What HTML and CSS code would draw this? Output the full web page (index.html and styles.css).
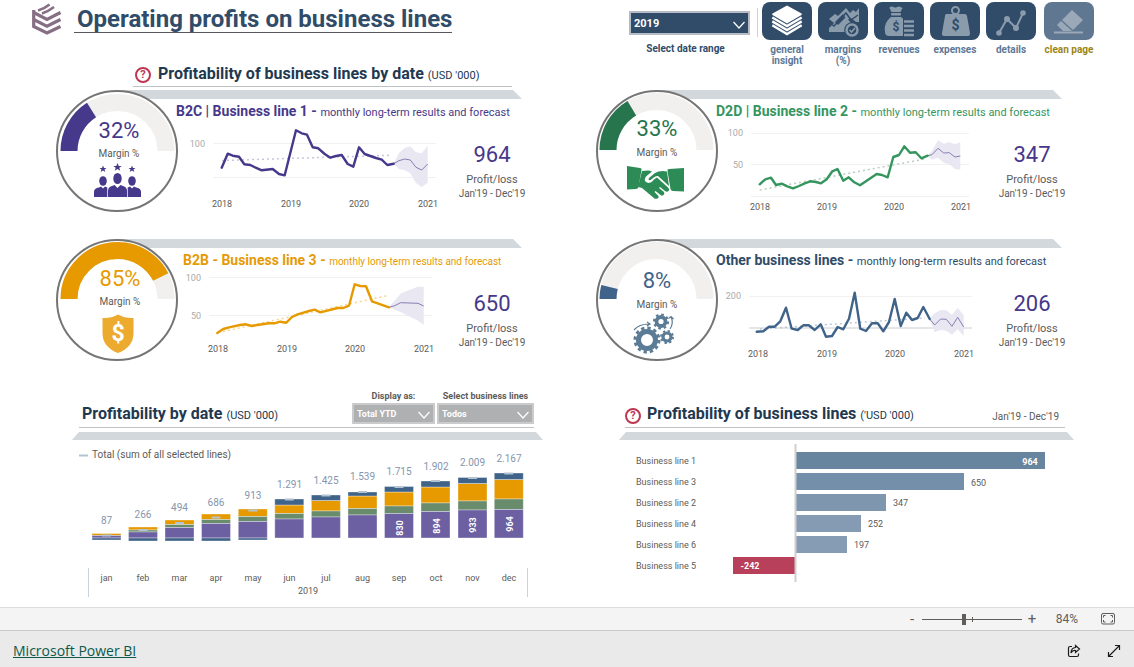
FILE: index.html
```html
<!DOCTYPE html>
<html lang="en">
<head>
<meta charset="utf-8">
<title>Operating profits on business lines</title>
<link rel="stylesheet" href="styles.css">
</head>
<body>
<main class="report">
  <header class="top">
    <svg class="logo" viewBox="0 0 30 32" aria-hidden="true">
      <g fill="none" stroke="#866f84" stroke-width="3.200">
        <path d="M1.700 7v16.500L15 30l13.500-6.500"/>
        <path d="M1.700 9.500L15 16.500 28.500 9.500"/>
        <path d="M1.700 16.500L15 23.300 28.500 16.500"/>
        <path d="M6 7.500Q12 6 17.500 1.500M10 10.500Q16 8.500 22 4" stroke-width="2.600"/>
      </g>
    </svg>
    <h1 class="top__title">Operating profits on business lines</h1>
    <div class="slicer slicer--date">
      <div class="select select--navy">
        <select id="year"><option>2019</option></select>
        <svg class="chevron" viewBox="0 0 12 8" aria-hidden="true"><path d="M.5 1L6 7l5.500-6"/></svg>
      </div>
      <label for="year">Select date range</label>
    </div>
    <div class="top__divider"></div>
    <nav class="nav">
      <button class="nav__item">
        <svg class="tile" viewBox="0 0 50 38" aria-hidden="true">
          <path fill="#fff" d="M25 3.500L39.500 11.500q.8.8 0 1.600L25 21.500 10.500 13q-.8-.8 0-1.500z"/>
          <path fill="none" stroke="#fff" stroke-width="2.400" d="M10.300 15.500L25 24l14.700-8.500M10.300 19.400L25 28l14.700-8.600M10.300 23.300L25 32l14.700-8.700"/>
        </svg>
        <span>general insight</span>
      </button>
      <button class="nav__item">
        <svg class="tile" viewBox="0 0 50 38" aria-hidden="true">
          <g fill="#8a9bac">
            <path d="M11 17l6-5 3 2 8-8 4 5 3-3 3 2 3-4v14l-3 0-5-4-4 2-4-6-9 9-5-4z"/>
            <path d="M11 30v-4l6-6 3 3 8-8 5 6 1 1-4 3-2 5z"/>
          </g>
          <path d="M11 20.500l5 3.500 12-13 5 7 7-5" fill="none" stroke="#304c69" stroke-width="1.500"/>
          <circle cx="34" cy="28" r="7.800" fill="#304c69"/>
          <circle cx="34" cy="28" r="5.500" fill="none" stroke="#8a9bac" stroke-width="2.400"/>
          <path d="M31.500 28l2 2 3.500-4" fill="none" stroke="#8a9bac" stroke-width="1.600"/>
        </svg>
        <span>margins (%)</span>
      </button>
      <button class="nav__item">
        <svg class="tile" viewBox="0 0 50 38" aria-hidden="true">
          <g fill="#8a9bac">
            <path d="M16 5q2-1 3.500 0t3.500 0 3.500 0l2 1-2 4h-9l-2-4z"/><rect x="17" y="11" width="10" height="2.500" rx="1"/>
            <path d="M17 15h10c5 4 7 9 6 15-.4 3-2 4-4 4H15c-2 0-4-1-4-4-1-6 1-11 6-15z"/>
          </g>
          <path d="M29 17h13v18H29z" fill="#304c69"/>
          <path d="M30 19.500h10M30 24h10M30 28.500h10M30 33h10" stroke="#8a9bac" stroke-width="2.400"/>
          <text x="22" y="29" class="tile__dollar">$</text>
        </svg>
        <span>revenues</span>
      </button>
      <button class="nav__item">
        <svg class="tile" viewBox="0 0 50 38" aria-hidden="true">
          <circle cx="25.500" cy="8.500" r="3.500" fill="none" stroke="#8a9bac" stroke-width="2"/>
          <path d="M16 12h19q1.500 0 2 2l3 17q.3 3-2 3H14q-2.500 0-2-3l3-17q.3-2 1-2z" fill="#8a9bac"/>
          <text x="25.500" y="28" class="tile__dollar tile__dollar--big">$</text>
        </svg>
        <span>expenses</span>
      </button>
      <button class="nav__item">
        <svg class="tile" viewBox="0 0 50 38" aria-hidden="true">
          <path d="M13 31l8-14 9 9 7-15" fill="none" stroke="#8a9bac" stroke-width="2"/>
          <g fill="#8a9bac"><circle cx="13" cy="31" r="2.800"/><circle cx="21" cy="17" r="3"/><circle cx="30" cy="26" r="3"/><circle cx="37" cy="11" r="2.800"/></g>
        </svg>
        <span>details</span>
      </button>
      <button class="nav__item nav__item--clean">
        <svg class="tile" viewBox="0 0 50 38" aria-hidden="true">
          <path d="M28 8l11 10-10 10-11-10zM17 19l11 10h-9l-6-6z" fill="#9ba8b8"/>
          <path d="M10 30.500h29" stroke="#9ba8b8" stroke-width="2"/>
        </svg>
        <span>clean page</span>
      </button>
    </nav>
  </header>

  <div class="section-head">
    <button class="help" aria-label="Help">?</button>
    <h2 class="heading">Profitability of business lines by date <small>(USD '000)</small></h2>
  </div>

  <section class="cards">
    <article class="card card--purple">
      <div class="card__band"></div>
      <svg class="gauge" viewBox="0 0 122 122">
        <circle class="gauge__ring" cx="60" cy="61" r="60"/>
        <path class="gauge__track" d="M12 61a48.500 48.500 0 0 1 97 0"/>
        <path class="gauge__fill" pathLength="100" stroke-dasharray="32 100" d="M12 61a48.500 48.500 0 0 1 97 0"/>
        <text class="gauge__value" x="62" y="48">32%</text>
        <text class="gauge__label" x="62" y="67">Margin %</text>
        <g fill="#46388a">
          <path d="M46 75.500l1 2.400h2.500l-2 1.600.8 2.500-2.300-1.500-2.300 1.500.8-2.500-2-1.600H45zM75 75.500l1 2.400h2.500l-2 1.600.8 2.500-2.300-1.500-2.300 1.500.8-2.500-2-1.600H74zM60.500 73l1.200 2.900h3l-2.400 1.900.9 3-2.700-1.800-2.700 1.800.9-3-2.400-1.900h3z"/>
          <ellipse cx="46" cy="91" rx="3.800" ry="4.800"/><ellipse cx="75" cy="91" rx="3.800" ry="4.800"/><ellipse cx="60.500" cy="88.500" rx="4.200" ry="5.500"/>
          <path d="M37 107v-5q0-4 5-4.500l2-1 2 2 2-2 2.300 1v9.500zM70.700 107v-9.500l2.300-1 2 2 2-2 2 1q5 .5 5 4.500v5zM51 107v-6q0-4 4-5l2.500-1 3 3 3-3 2.500 1q4 1 4 5v6z"/>
        </g>
      </svg>
      <h3 class="card__title">B2C | Business line 1 - <small>monthly long-term results and forecast</small></h3>
      <svg class="chart" viewBox="176 123 277 90">
        <path class="grid" d="M213 143.500h223M213 177.500h223"/>
        <text class="axis-y" x="205" y="147">100</text>
        <path class="range" d="M393.700 163.700L399 153l5.700-5 5.600-1.700 5.700 6 5.700 1 6-7.600v37l-6 4.300-5.700-4-5.700-9.700-5.600-3-5.700-1.300z"/>
        <path class="trend" d="M222 160.500L391 155.300"/>
        <polyline class="forecast" points="393.700,163.700 399,160.700 404.700,159 410.300,160 416,167.300 421.700,170 427.700,164"/>
        <polyline class="actual" points="221.700,167.700 227.700,153.700 232.700,155.700 239,156.700 244.300,164.300 250.300,165 255.700,167.700 261.700,170.300 272.700,169 279,174 284.700,175.300 296,130.300 301.700,133.300 307,134.700 312.700,147.300 318.300,148.300 324.700,154 330.300,157.700 336,156 341.700,155 347.700,164 353.300,166.700 359,147.300 364.700,154 370.300,156 376,158 381.700,159.700 387.300,165 393.700,163.700"/>
        <g class="axis-x"><text x="222" y="207">2018</text><text x="291" y="207">2019</text><text x="359" y="207">2020</text><text x="428" y="207">2021</text></g>
      </svg>
      <div class="kpi"><strong>964</strong><span>Profit/loss</span><span class="kpi__period">Jan'19 - Dec'19</span></div>
    </article>

    <article class="card card--green">
      <div class="card__band"></div>
      <svg class="gauge" viewBox="0 0 122 122">
        <circle class="gauge__ring" cx="60" cy="61" r="60"/>
        <path class="gauge__track" d="M11 60a48.500 48.500 0 0 1 97 0"/>
        <path class="gauge__fill" pathLength="100" stroke-dasharray="33 100" d="M11 60a48.500 48.500 0 0 1 97 0"/>
        <text class="gauge__value" x="60" y="46">33%</text>
        <text class="gauge__label" x="60" y="66">Margin %</text>
        <g fill="#2d8c56">
          <path d="M30 76l13 2q2 0 1.500 2l-3 17q-.5 2-2.500 2l-9 .5zM87 78l-15 1q-2 0-1.500 2l3 18q.5 2 2.500 2l11 .5z"/>
          <path d="M45 81l6-.5q2 0 4 1l-6 5q-3 4 1 6 4 1.500 7-3l3-2 11 10q2 2 .5 3.500t-3.500 0l-5-4-1 1 5 4q1 2-.5 3t-3 0l-5-4-1 1 4 4q.5 2-1 2.500t-3 0L45 98l-4-1z"/>
          <path d="M52 88l6-5q5-3 12-1.500l2 14.500-11-10q-2-.5-5 2-3 3-4 2t0-2z"/>
        </g>
      </svg>
      <h3 class="card__title">D2D | Business line 2 - <small>monthly long-term results and forecast</small></h3>
      <svg class="chart" viewBox="716 123 277 90">
        <path class="grid" d="M751 133.500h218M751 164.500h218M751 196.500h218"/>
        <text class="axis-y" x="743" y="136">100</text><text class="axis-y" x="743" y="168">50</text>
        <path class="range" d="M927.700 155.700L932 151l6-10.700 5.700 3.400 5.600-1.700 5.700 2.300 5.300-2v27.400l-5.300-.7-5.700-4.700-5.600-1.600-5.700-5-6 2z"/>
        <path class="trend" d="M759.700 190L925 159"/>
        <polyline class="forecast" points="927.700,155.700 932,154.700 938,148.300 943.700,153 949.300,152.700 955,157 960.300,156"/>
        <polyline class="actual" points="759.700,184.300 765.300,179.300 771,177.700 776,185 781.700,183.700 787.300,186.300 793,188.300 799,186 804.700,183.300 810.300,181.300 816,182 821,183.300 826.700,179.300 832.300,171.300 837.500,169 843.300,180.700 848.700,177.300 854.300,182.300 860,185.300 876.700,174 882,175 887.700,177.300 893.300,157 899,155 904.300,146.300 910,152.700 915.700,152.300 921.300,158.300 927.700,155.700"/>
        <g class="axis-x"><text x="760" y="210">2018</text><text x="827" y="210">2019</text><text x="894" y="210">2020</text><text x="961" y="210">2021</text></g>
      </svg>
      <div class="kpi"><strong>347</strong><span>Profit/loss</span><span class="kpi__period">Jan'19 - Dec'19</span></div>
    </article>

    <article class="card card--orange">
      <div class="card__band"></div>
      <svg class="gauge" viewBox="0 0 122 122">
        <circle class="gauge__ring" cx="60" cy="61" r="60"/>
        <path class="gauge__track" d="M12 60a48.500 48.500 0 0 1 97 0"/>
        <path class="gauge__fill" pathLength="100" stroke-dasharray="85 100" d="M12 60a48.500 48.500 0 0 1 97 0"/>
        <text class="gauge__value" x="63" y="47">85%</text>
        <text class="gauge__label" x="63" y="66">Margin %</text>
        <path fill="#ecaa2e" d="M61 75.500q7 4 15.500 3.500V94q0 14-15.500 20-15.500-6-15.500-20V79q8.500.5 15.500-3.500z"/>
        <text class="gauge__dollar" x="61" y="102">$</text>
      </svg>
      <h3 class="card__title">B2B - Business line 3 - <small>monthly long-term results and forecast</small></h3>
      <svg class="chart" viewBox="176 272 277 90">
        <path class="grid" d="M209 277.500h223M209 315.500h223"/>
        <text class="axis-y" x="201" y="281">100</text><text class="axis-y" x="201" y="319">50</text>
        <path class="range" d="M389 307.300L401 293.300l11-4.300 5.700-2.300h6V325l-5.700-4.300-17-8.400z"/>
        <path class="trend" d="M223 331.500L388 295.500"/>
        <polyline class="forecast" points="389,307.300 394.700,305.700 400.700,302.700 418,303.300 423.700,306"/>
        <polyline class="actual" points="217.300,333 223.300,329 229,327.300 240,325 246,324.300 251.700,326 257.300,325 269,323.300 274.300,323.300 280.300,321.700 286.300,322.700 292,317 297.700,314.300 309,311 314.700,309.700 320.300,312.300 337.700,308 343.300,308 349,305.700 354.700,284.300 360.300,286 366,286.300 372,301.300 389,307.300"/>
        <g class="axis-x"><text x="218" y="352">2018</text><text x="287" y="352">2019</text><text x="355" y="352">2020</text><text x="424" y="352">2021</text></g>
      </svg>
      <div class="kpi"><strong>650</strong><span>Profit/loss</span><span class="kpi__period">Jan'19 - Dec'19</span></div>
    </article>

    <article class="card card--blue">
      <div class="card__band"></div>
      <svg class="gauge" viewBox="0 0 122 122">
        <circle class="gauge__ring" cx="60" cy="61" r="60"/>
        <path class="gauge__track" d="M11 60a48.500 48.500 0 0 1 97 0"/>
        <path class="gauge__fill" pathLength="100" stroke-dasharray="8 100" d="M11 60a48.500 48.500 0 0 1 97 0"/>
        <text class="gauge__value" x="60" y="49">8%</text>
        <text class="gauge__label" x="60" y="69">Margin %</text>
        <g fill="none" stroke="#5c7c95">
          <circle cx="50" cy="101" r="8.500" stroke-width="5"/><circle cx="50" cy="101" r="12" stroke-width="3" stroke-dasharray="3.300 2.980"/>
          <circle cx="64" cy="82.500" r="4.500" stroke-width="3.800"/><circle cx="64" cy="82.500" r="7" stroke-width="2.200" stroke-dasharray="2.600 2.900"/>
          <circle cx="70" cy="98" r="4" stroke-width="3.200"/><circle cx="70" cy="98" r="6" stroke-width="2" stroke-dasharray="2.300 2.410"/>
          <path d="M37 91q5-6 15-6M50 83l3 2-3 2M73 90q4-6 1-12M71.500 79.500l2.500-2 2.500 2.500" stroke-width="1.200"/>
        </g>
      </svg>
      <h3 class="card__title">Other business lines - <small>monthly long-term results and forecast</small></h3>
      <svg class="chart" viewBox="716 272 277 90">
        <path class="grid" d="M749 296.500h223"/><path class="grid grid--zero" d="M749 328h223"/>
        <text class="axis-y" x="741" y="299">200</text>
        <path class="range" d="M929.700 319l5-5.700 6-3.300 5.600.3 5.700 4.400 5.700-6.700 6 7.300V336l-6-6.700-5.700 5.400-5.700-4-5.600-.7-6 2.300z"/>
        <path class="trend" d="M760 329L925 318"/>
        <polyline class="forecast" points="929.700,319 934.700,325 940.700,319 946.300,319.300 952,326.300 957.700,317.300 963.700,327"/>
        <polyline class="actual" points="756.700,331.700 763.300,331.300 769,326.700 774.700,326.700 780.300,321.300 786,307.700 791.700,328.700 797.700,330 803.300,325.300 808.700,325.300 814.700,330 820.700,324.300 826,336.700 832,336 837.700,327 843.300,329.300 849,318.700 854.700,292.700 860.300,328.700 866,331 872,323.300 877.700,323.300 883.300,331.300 889,322 894.700,299 900.700,326 906.300,312.700 912,320 917.700,318 923.300,307 929.700,319"/>
        <g class="axis-x"><text x="758" y="357">2018</text><text x="827" y="357">2019</text><text x="895" y="357">2020</text><text x="964" y="357">2021</text></g>
      </svg>
      <div class="kpi"><strong>206</strong><span>Profit/loss</span><span class="kpi__period">Jan'19 - Dec'19</span></div>
    </article>
  </section>

  <section class="panels">
    <article class="panel">
      <div class="panel__head">
        <h2 class="heading">Profitability by date <small>(USD '000)</small></h2>
        <div class="slicer slicer--gray">
          <label for="display">Display as:</label>
          <div class="select"><select id="display"><option>Total YTD</option></select><svg class="chevron" viewBox="0 0 12 8" aria-hidden="true"><path d="M.5 1L6 7l5.500-6"/></svg></div>
        </div>
        <div class="slicer slicer--gray slicer--wide">
          <label for="lines">Select business lines</label>
          <div class="select"><select id="lines"><option>Todos</option></select><svg class="chevron" viewBox="0 0 12 8" aria-hidden="true"><path d="M.5 1L6 7l5.500-6"/></svg></div>
        </div>
      </div>
      <div class="panel__band"></div>
      <svg class="plot" viewBox="72 440 471 162">
        <path d="M79 455.500h9" stroke="#b4c3d1" stroke-width="2"/>
        <text class="legend" x="92" y="458">Total (sum of all selected lines)</text>
        <g class="seg seg--orange">
          <path d="M92 533.500h29v2h-29zM128.500 527h29v3h-29zM165 520h29v4.500h-29zM201.500 514h29v5.500h-29zM238.300 509h29v7.500h-29zM274.800 505h29v8.500h-29zM311.400 500.500h29v10.500h-29zM348 496h29v12.500h-29zM384.500 492h29v14h-29zM421 487h29v16h-29zM458 483.500h29v17.500h-29zM494.300 479.500h29v19.500h-29z"/>
        </g>
        <g class="seg seg--green">
          <path d="M128.500 530h29v2h-29zM165 524.500h29v3h-29zM201.500 519.500h29v4h-29zM238.300 516.500h29v5h-29zM274.800 513.500h29v5.500h-29zM311.400 511h29v6h-29zM348 508.500h29v6.500h-29zM384.500 506h29v7.500h-29zM421 503h29v8.500h-29zM458 501h29v9h-29zM494.300 499h29v10.500h-29z"/>
        </g>
        <g class="seg seg--purple">
          <path d="M92 535.500h29v2.500h-29zM128.500 532h29v6h-29zM165 527.500h29v10.500h-29zM201.500 523.500h29v14.500h-29zM238.300 521.500h29v16.500h-29zM274.800 519h29v19h-29zM311.400 517h29v21h-29zM348 515h29v23h-29zM384.500 513.500h29v24.500h-29zM421 511.500h29v26.500h-29zM458 510h29v28h-29zM494.300 509.500h29v28.500h-29z"/>
        </g>
        <g class="seg seg--blue">
          <path d="M92 538h29v2h-29zM128.500 538h29v3h-29zM165 538h29v3h-29zM201.500 538h29v3h-29zM238.300 538h29v2h-29zM274.800 499h29v6h-29zM311.400 495h29v5.500h-29zM348 492h29v4h-29zM384.500 486.500h29v5.500h-29zM421 481h29v6h-29zM458 477.500h29v6h-29zM494.300 473h29v6.500h-29z"/>
        </g>
        <path class="marks" d="M102 535.500h9M138.500 530h9M175 523h9M211.500 517.500h9M248.300 510.500h9M284.800 499.500h9M321.400 495.500h9M358 492h9M394.500 487h9M431 481h9M468 478h9M504.300 473.500h9"/>
        <g class="totals">
          <text x="106.500" y="524">87</text><text x="143" y="518">266</text><text x="179.500" y="511">494</text><text x="216" y="506">686</text><text x="253" y="499">913</text><text x="289.500" y="488">1.291</text><text x="326" y="484">1.425</text><text x="362.500" y="480">1.539</text><text x="399" y="475">1.715</text><text x="436" y="470">1.902</text><text x="472.500" y="466">2.009</text><text x="509" y="462">2.167</text>
        </g>
        <g class="inside">
          <text transform="translate(403 528) rotate(-90)">830</text><text transform="translate(440 526) rotate(-90)">894</text><text transform="translate(476 525) rotate(-90)">933</text><text transform="translate(513 524) rotate(-90)">964</text>
        </g>
        <g class="months">
          <text x="106.500" y="581">jan</text><text x="143" y="581">feb</text><text x="179.500" y="581">mar</text><text x="216" y="581">apr</text><text x="253" y="581">may</text><text x="289.500" y="581">jun</text><text x="326" y="581">jul</text><text x="362.500" y="581">aug</text><text x="399" y="581">sep</text><text x="436" y="581">oct</text><text x="472.500" y="581">nov</text><text x="509" y="581">dec</text><text x="308" y="594">2019</text>
        </g>
        <path d="M88.500 568v29M527.500 568v29" stroke="#c9d3dc"/>
      </svg>
    </article>

    <article class="panel panel--ranking">
      <div class="panel__head">
        <button class="help" aria-label="Help">?</button>
        <h2 class="heading">Profitability of business lines <small>('USD '000)</small></h2>
        <span class="panel__period">Jan'19 - Dec'19</span>
      </div>
      <div class="panel__band"></div>
      <svg class="plot" viewBox="619 440 455 162">
        <rect x="796" y="452" width="249" height="17" fill="#6885a0"/>
        <rect x="796" y="473" width="168" height="17" fill="#748fa9"/>
        <rect x="796" y="494" width="90" height="17" fill="#7f96af"/>
        <rect x="796" y="515" width="65" height="17" fill="#859bb3"/>
        <rect x="796" y="536" width="51" height="17" fill="#869cb4"/>
        <rect x="733" y="557" width="62" height="17" fill="#b9405a"/>
        <path d="M795.500 444v138" stroke="#cfcfcf" stroke-width="2"/>
        <g class="rows">
          <text x="636" y="464">Business line 1</text><text x="636" y="485">Business line 3</text><text x="636" y="506">Business line 2</text><text x="636" y="527">Business line 4</text><text x="636" y="548">Business line 6</text><text x="636" y="569">Business line 5</text>
          <text x="971" y="486">650</text><text x="893" y="506">347</text><text x="868" y="527">252</text><text x="854" y="548">197</text>
        </g>
        <g class="inside"><text x="1030" y="465">964</text><text x="750" y="569">-242</text></g>
      </svg>
    </article>
  </section>
</main>

<div class="zoombar">
  <button class="zoombar__step" aria-label="Zoom out">-</button>
  <input class="zoombar__range" type="range" min="0" max="120" value="50" aria-label="Zoom">
  <button class="zoombar__step" aria-label="Zoom in">+</button>
  <span class="zoombar__value">84%</span>
  <button class="icon-button" aria-label="Fit to page">
    <svg width="14" height="12" viewBox="0 0 14 12"><rect x=".5" y=".5" width="13" height="10.500" rx="1.500"/><path d="M2.500 4.500v-2h2M9.500 2.500h2v2M11.500 7v2h-2M4.500 9h-2V7"/></svg>
  </button>
</div>
<footer class="footer">
  <a class="footer__link" href="#">Microsoft Power BI</a>
  <button class="icon-button icon-button--dark" aria-label="Share">
    <svg width="14" height="14" viewBox="0 0 14 14"><path d="M5 2.500H3Q1.500 2.500 1.500 4v7Q1.500 12.500 3 12.500h7q1.500 0 1.500-1.500v-1.500M8.500 1.500l4 3.500-4 3.500v-2Q5.500 6 4 9q0-5 4.500-5.500z"/></svg>
  </button>
  <button class="icon-button icon-button--dark" aria-label="Full screen">
    <svg width="14" height="14" viewBox="0 0 14 14"><path d="M8 1.500h4.500V6M12.500 1.500l-11 11M1.500 8v4.500H6"/></svg>
  </button>
</footer>
</body>
</html>
```
FILE: styles.css
```css
* { box-sizing: border-box; }

body {
  margin: 0;
  min-height: 100vh;
  display: flex;
  flex-direction: column;
  font-family: Roboto, "Liberation Sans", sans-serif;
  font-size: 11px;
  color: #5c5b59;
  background: #fff;
}

h1, h2, h3 { margin: 0; }
button { padding: 0; border: 0; background: none; font: inherit; color: inherit; cursor: pointer; }
svg { display: block; }

.report { flex: 1; }

/* Header */
.top { display: flex; align-items: flex-start; padding: 2px 40px 0 32px; height: 64px; }
.logo { width: 30px; height: 32px; margin-top: 1px; }
.top__title {
  margin: 4px auto 0 12px;
  padding: 0 0 0 3px;
  border-bottom: 1px solid #55595e;
  font-size: 24px;
  line-height: 26px;
  color: #304c69;
}
.top__divider { width: 1px; height: 29px; margin: 6px 4px 0 0; background: #d0d0d0; }

.slicer { display: flex; flex-direction: column; font-weight: 700; }
.slicer label { line-height: 12px; font-size: 10px; text-align: center; white-space: nowrap; }
.slicer--date { width: 121px; margin: 9px 7px 0 0; gap: 8px; color: #304c69; }
.slicer--date label { padding-right: 8px; }

.select { display: grid; align-items: center; }
.select select, .chevron { grid-area: 1 / 1; }
.select select {
  width: 100%;
  height: 21px;
  padding: 0 3px;
  border: 2px solid #cbcbcb;
  border-radius: 0;
  appearance: none;
  background: #aeb0b1;
  color: #fff;
  font: 700 9px Roboto, "Liberation Sans", sans-serif;
}
.select--navy select { height: 24px; border-color: #b5bcc5; background: #304c69; font-size: 11px; }
.chevron { justify-self: end; width: 12px; height: 8px; margin: 3px 5px 0 0; fill: none; stroke: #fff; stroke-width: 1.2; pointer-events: none; }

.nav { display: flex; gap: 6px; }
.nav__item { width: 50px; display: flex; flex-direction: column; align-items: center; gap: 4px; font-size: 10px; font-weight: 700; line-height: 11px; color: #5d7896; }
.nav__item--clean { margin-left: 2px; color: #9a8518; white-space: nowrap; }
.tile { width: 50px; height: 38px; border-radius: 8px; background: #304c69; }
.nav__item--clean .tile { background: #607792; }
.tile__dollar { font-size: 12px; font-weight: 700; text-anchor: middle; fill: #304c69; }
.tile__dollar--big { font-size: 14px; }

/* Headings */
.section-head { display: flex; align-items: center; gap: 7px; width: 379px; height: 23px; margin-left: 133px; padding: 0 2px; border-bottom: 1px solid #bfc2c4; }
.heading { font-size: 16px; line-height: 20px; color: #22384f; white-space: nowrap; }
.heading small { font-size: 11px; font-weight: 400; }
.help { flex: none; width: 16px; height: 16px; border: 2px solid #bd3752; border-radius: 50%; font-size: 11px; font-weight: 700; line-height: 12px; color: #bd3752; }

/* Business line cards */
.cards { display: grid; grid-template-columns: 1fr 1fr; gap: 26px 66px; padding: 3px 63px 0 57px; }
.card { display: grid; grid-template-columns: 119px 1fr 78px; grid-template-rows: 9px 24px auto; }
.card__band { grid-area: 1 / 1 / 2 / 4; margin: 0 9px 0 60px; background: #d3d8dc; clip-path: polygon(0 0, calc(100% - 9px) 0, 100% 100%, 0 100%); }
.gauge { grid-area: 1 / 1 / 4 / 2; z-index: 1; width: 122px; height: 122px; overflow: visible; }
.card__title { grid-area: 2 / 2 / 3 / 4; font-size: 14px; line-height: 24px; color: var(--tone); white-space: nowrap; }
.card__title small { font-size: 11px; font-weight: 400; }
.chart { grid-area: 3 / 2 / 4 / 3; width: 100%; }
.kpi { grid-area: 3 / 3 / 4 / 4; display: flex; flex-direction: column; align-items: center; padding-top: 19px; line-height: 14px; white-space: nowrap; }
.kpi strong { margin-bottom: 5px; font-size: 22px; font-weight: 400; line-height: 26px; color: #46388a; }
.kpi__period { font-size: 10px; }

.card--purple { --tone: #46388a; --gauge: #46388a; --trend: #c9c4e0; }
.card--green { --tone: #35955f; --gauge: #26754c; --trend: #b9cdbd; }
.card--orange { --tone: #e59a06; --gauge: #e69a00; --trend: #f8d48e; }
.card--orange .card__title { padding-left: 7px; }
.card--orange .card__title small { font-size: 10px; }
.card--blue { --tone: #304c69; --gauge: #3f6389; --trend: #b9c8d6; }

.gauge__ring { fill: #fff; stroke: #757575; stroke-width: 2; }
.gauge__track, .gauge__fill { fill: none; stroke-width: 17; }
.gauge__track { stroke: #f1f0ef; }
.gauge__fill { stroke: var(--gauge); }
.gauge text { text-anchor: middle; }
.gauge__value { font-size: 22px; fill: var(--gauge); }
.gauge__label { font-size: 10px; fill: #5c5b59; }
.gauge .gauge__dollar { font-size: 23px; font-weight: 700; fill: #fff; }

.grid { fill: none; stroke: #f1f1f1; }
.grid--zero { stroke: #e4e6e8; stroke-width: 2; }
.axis-y { font-size: 9px; text-anchor: end; fill: #aaa; }
.axis-x { font-size: 9px; text-anchor: middle; fill: #5c5b59; }
.actual { fill: none; stroke: var(--gauge); stroke-width: 2.4; stroke-linejoin: round; stroke-linecap: round; }
.card--green .actual { stroke: #35955f; }
.forecast { fill: none; stroke: #8a7db5; stroke-width: 1; }
.range { fill: #e9e7f1; }
.trend { fill: none; stroke: var(--trend); stroke-width: 1.5; stroke-dasharray: 2 3; }

/* Bottom panels */
.panels { display: grid; grid-template-columns: 471fr 455fr; gap: 76px; padding: 28px 60px 0 72px; }
.panel__head { display: flex; align-items: flex-end; gap: 2px; height: 38px; margin: 0 9px 0 7px; padding-bottom: 3px; border-bottom: 1px solid #c2c2c2; }
.panel__head .heading { margin-right: auto; padding-left: 3px; line-height: 16px; }
.panel--ranking .panel__head { gap: 3px; margin-left: 6px; }
.panel__period { padding-right: 6px; line-height: 14px; font-size: 10px; }
.panel__band { height: 8px; margin-top: 4px; background: #d3d8dc; clip-path: polygon(7px 0, calc(100% - 7px) 0, 100% 100%, 0 100%); }
.slicer--gray { width: 83px; gap: 1px; }
.slicer--gray label { font-size: 9px; }
.slicer--wide { width: 97px; }
.plot { width: 100%; }

.legend { font-size: 10px; fill: #5c5b59; }
.seg { stroke: #fff; stroke-opacity: .35; stroke-width: 1; }
.seg--orange { fill: #e69a00; }
.seg--green { fill: #688c6c; }
.seg--purple { fill: #6c60a2; }
.seg--blue { fill: #3f6389; }
.marks { fill: none; stroke: #b4c3d1; stroke-width: 2; }
.totals { font-size: 10px; text-anchor: middle; fill: #8496ae; }
.months { font-size: 9px; text-anchor: middle; fill: #5c5b59; }
.rows { font-size: 9px; fill: #5c5b59; }
.inside { font-size: 9px; font-weight: 700; text-anchor: middle; fill: #fff; }

/* Viewer chrome */
.zoombar { display: flex; align-items: center; height: 24px; padding-right: 19px; justify-content: flex-end; border-top: 1px solid #dcdcdc; border-bottom: 1px solid #c8c8c8; background: #f4f4f4; color: #605e5c; }
.zoombar__step { width: 14px; font-size: 15px; line-height: 20px; }
.zoombar__range {
  width: 100px;
  height: 12px;
  margin: 0 3px;
  appearance: none;
  background:
    linear-gradient(#605e5c, #605e5c) center / 100% 1px no-repeat,
    linear-gradient(#605e5c, #605e5c) center / 1px 5px no-repeat;
}
.zoombar__range::-webkit-slider-thumb { appearance: none; width: 4px; height: 11px; background: #605e5c; }
.zoombar__value { width: 62px; padding-right: 6px; text-align: center; font-size: 12px; }
.icon-button svg { fill: none; stroke: #605e5c; }
.icon-button--dark svg { stroke: #1b1b1b; stroke-width: 1.2; }

.footer { display: flex; align-items: center; gap: 26px; height: 36px; padding: 4px 13px 0; background: #eaeaea; }
.footer__link { margin-right: auto; font-family: "Open Sans", sans-serif; font-size: 14px; line-height: 20px; color: #0b5a4c; }
```
